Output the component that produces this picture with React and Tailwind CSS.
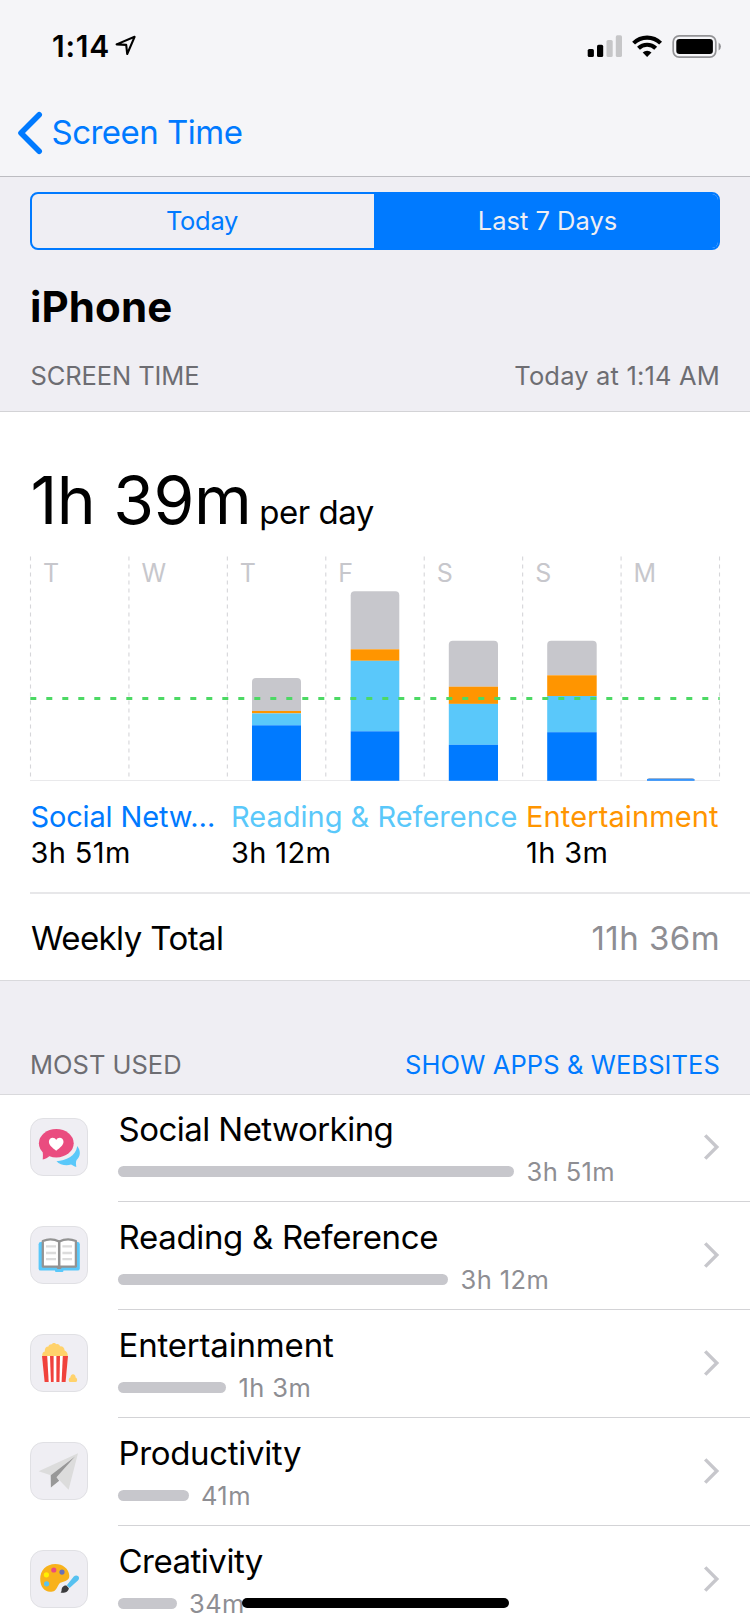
import React from "react";

const GRAY = "#c7c7cc";
const ORANGE = "#ff9500";
const SKY = "#5ac8fa";
const BLUE = "#007aff";

function StatusBar() {
  return (
    <div className="flex h-[92px] items-center justify-between pr-[28px] pl-[52px]">
      <div className="flex items-center gap-[5px]">
        <span className="text-[30px] leading-none font-semibold tracking-[0.8px]">1:14</span>
        <svg width="22" height="22" viewBox="0 0 22 22" className="mb-px">
          <path d="M1.6 9.4 L19.6 1.8 L12.2 19 L11.2 9.9 Z" fill="none" stroke="#000" strokeWidth="2.1" strokeLinejoin="round" />
        </svg>
      </div>
      <svg width="135" height="24" viewBox="587 34 135 24">
        <rect x="587.7" y="49" width="6.2" height="8" rx="1.6" fill="#000" />
        <rect x="597" y="44.8" width="6.2" height="12.2" rx="1.6" fill="#000" />
        <rect x="606.5" y="40" width="6.2" height="17" rx="1.6" fill="#c6c6c8" />
        <rect x="615.8" y="35.3" width="6.2" height="21.7" rx="1.6" fill="#c6c6c8" />
        <g fill="none" stroke="#000" strokeWidth="4.1">
          <path d="M633.6 43.1 A19.3 19.3 0 0 1 660.6 43.1" />
          <path d="M638.5 48.2 A12.3 12.3 0 0 1 655.7 48.2" />
        </g>
        <path d="M647.1 57 L642.7 52.4 A6.4 6.4 0 0 1 651.5 52.4 Z" fill="#000" />
        <rect x="673.2" y="35.9" width="42.6" height="21.2" rx="6" fill="none" stroke="#939396" strokeWidth="1.7" />
        <rect x="676.3" y="38.9" width="36.6" height="15" rx="3.2" fill="#000" />
        <path d="M718.6 42.6 A4.6 4.6 0 0 1 718.6 50.6 Z" fill="#939396" />
      </svg>
    </div>
  );
}

function NavBar() {
  return (
    <div className="flex h-[81px] items-center pl-[17px] text-[#007aff]">
      <svg width="26" height="44" viewBox="0 0 26 44">
        <path d="M22.2 3.8 L4 22 L22.2 40.2" fill="none" stroke="currentColor" strokeWidth="5.6" strokeLinecap="round" strokeLinejoin="round" />
      </svg>
      <span className="ml-[8.5px] text-[33px] leading-none tracking-[-0.52px]">Screen Time</span>
    </div>
  );
}

const days = ["T", "W", "T", "F", "S", "S", "M"];
const bars = [
  { x: 252, w: 49, top: 678, orange: 711, sky: 713.4, blue: 725.3 },
  { x: 350.7, w: 48.6, top: 591.3, orange: 649.3, sky: 660.8, blue: 731.3 },
  { x: 448.8, w: 49.2, top: 640.7, orange: 686.7, sky: 703.9, blue: 744.8 },
  { x: 547.2, w: 49.5, top: 640.7, orange: 675.3, sky: 696, blue: 732.2 },
];
const BASE = 780.8;

function Chart() {
  return (
    <svg width="750" height="235" viewBox="0 550 750 235" className="block">
      {[0, 1, 2, 3, 4, 5, 6, 7].map((i) => (
        <line key={i} x1={30.5 + i * 98.43} x2={30.5 + i * 98.43} y1="556.5" y2="778" stroke="#d6d6d9" strokeWidth="1.1" strokeDasharray="4 4" />
      ))}
      {days.map((d, i) => (
        <text key={i} x={43 + i * 98.43} y="581.6" fontSize="25" fill={GRAY}>{d}</text>
      ))}
      <rect x="30" y="780" width="690" height="1" fill="#e9e9eb" />
      {bars.map((b) => (
        <g key={b.x}>
          <path d={`M${b.x} ${b.orange} V${b.top + 4} q0 -4 4 -4 H${b.x + b.w - 4} q4 0 4 4 V${b.orange} Z`} fill={GRAY} />
          <rect x={b.x} y={b.orange} width={b.w} height={b.sky - b.orange} fill={ORANGE} />
          <rect x={b.x} y={b.sky} width={b.w} height={b.blue - b.sky} fill={SKY} />
          <rect x={b.x} y={b.blue} width={b.w} height={BASE - b.blue} fill={BLUE} />
        </g>
      ))}
      <path d="M647 780.8 q0 -2.8 2.5 -2.8 H692 q2.5 0 2.5 2.8 Z" fill="#9fb2cc" />
      <rect x="647" y="779" width="47.5" height="1.8" fill="#3395ff" />
      <line x1="30.3" x2="719.7" y1="698.5" y2="698.5" stroke="#4cd964" strokeWidth="2.8" strokeDasharray="6 10" />
    </svg>
  );
}

function SocialIcon() {
  return (
    <g>
      <path d="M47.3 28 C51 33 50.6 38.5 46.6 42 C45.6 43.5 46 46.5 46.3 49 C44.3 48.5 42.3 47.3 41 46.6 C36 48 29.5 46.8 26.5 43.2 C36 42.5 45.6 38.5 47.3 28 Z" fill="#5ac8fa" />
      <ellipse cx="26.3" cy="25.2" rx="17.4" ry="14.2" fill="#ea4c7f" />
      <path d="M12.2 32 C13.2 35 13 38.5 12.7 41.6 C15.5 41 17.5 39.8 19.5 38 Z" fill="#ea4c7f" />
      <path d="M26.2 32.8 C22 29.3 18.9 27 18.9 23.7 C18.9 19.2 24.5 18.2 26.2 22 C27.9 18.2 33.5 19.2 33.5 23.7 C33.5 27 30.4 29.3 26.2 32.8 Z" fill="#fff" />
    </g>
  );
}

function BookIcon() {
  return (
    <g>
      <rect x="8.6" y="16" width="41.2" height="28.6" rx="2.2" fill="#5ac8fa" />
      <rect x="25" y="43" width="8.4" height="3" rx="1" fill="#5ac8fa" />
      <path d="M12.8 15 Q21 11.4 29.2 15.6 Q37.4 11.4 45.9 15 V40.6 H12.8 Z" fill="#fff" stroke="#939393" strokeWidth="2.3" strokeLinejoin="round" />
      <path d="M26.4 40.8 H32 L31 43 H27.4 Z" fill="#939393" />
      <path d="M29.2 15.6 V42" stroke="#939393" strokeWidth="2.5" />
      <path d="M16 20.4 H26 M16 27 H26 M16 33.2 H26 M32.4 20.4 H42 M32.4 27 H42 M32.4 33.2 H42" stroke="#dcdcdc" strokeWidth="2.3" />
    </g>
  );
}

function PopcornIcon() {
  return (
    <g>
      <path d="M12.4 22.4 C11.8 19.6 13 17.6 14.8 17.4 C14.6 14.4 16 12.6 18.4 12.6 C18.8 10.8 20.4 10 21.8 10.3 C22.8 8.6 25.2 8.6 26.2 10.3 C28 9.6 29.6 10.6 30 12.4 C32.6 12 34.6 14 34.6 16.4 C37 17.6 38.2 19.8 37.6 22.4 Z" fill="#ffd26b" />
      <path d="M12 22 H38 L35.6 48 H14.6 Z" fill="#fff" />
      <path d="M12 22 H17.2 L18.7 48 H14.6 Z" fill="#f0423c" />
      <path d="M20 22 H23.6 V48 H20.9 Z" fill="#f0423c" />
      <path d="M26.4 22 H30 L29.5 48 H26.4 Z" fill="#f0423c" />
      <path d="M32.8 22 H38 L35.6 48 H31.6 Z" fill="#f0423c" />
      <path d="M38.8 46.8 C38.4 44.8 39.4 43.8 40.4 43.6 C40.4 41.6 41.6 40.3 43 40.3 C44.6 40.3 45.6 41.6 45.6 43.4 C47 44 47.4 45.6 47 47 Q46.8 48 45.6 48 H40 Q39 48 38.8 46.8 Z" fill="#ffd26b" />
    </g>
  );
}

function PlaneIcon() {
  return (
    <g>
      <path d="M48 11.2 L8.6 29.2 L20.8 33.2 L44.6 14.6 L26.6 35.2 L38.6 47.8 Z" fill="#dcdcdc" />
      <path d="M20.7 33.2 L45 14.4 L26.5 35.2 L29.2 38.8 L20.9 45.4 Z" fill="#989898" />
    </g>
  );
}

function PaletteIcon() {
  return (
    <g>
      <path d="M39.3 25.5 C38.8 18.5 32.5 13.9 25.4 13.9 C16 13.9 10.2 20.5 10.2 28.8 C10.2 36.8 14.6 41.8 20 41.8 C28.6 41.8 26.4 34 31.2 32.4 C35 31 39.6 30.6 39.3 25.5 Z" fill="#f8b21b" />
      <circle cx="16.4" cy="24.8" r="2.6" fill="#fff100" />
      <circle cx="23.8" cy="20" r="2.6" fill="#ea4c7f" />
      <circle cx="32" cy="22.1" r="2.6" fill="#6a72b8" />
      <circle cx="16.6" cy="33.8" r="2.6" fill="#5ac3ee" />
      <path d="M48.3 26.3 C49.6 27.7 49 29.5 47.9 30.6 L39.6 38 L36.8 35.3 L43.8 26.6 C45 25.2 47 25 48.3 26.3 Z" fill="#56c1f0" />
      <path d="M36.4 35.6 L38.9 38.2 C38.4 41.6 34.6 43.6 30.6 42.6 C32.2 41.6 31 39.6 32.2 37.6 C33.2 36 35 35.4 36.4 35.6 Z" fill="#3b3b3d" />
    </g>
  );
}

const apps = [
  { name: "Social Networking", time: "3h 51m", Icon: SocialIcon, bar: "w-[396px]", track: "tracking-[-0.54px]" },
  { name: "Reading & Reference", time: "3h 12m", Icon: BookIcon, bar: "w-[330px]", track: "tracking-[-0.32px]" },
  { name: "Entertainment", time: "1h 3m", Icon: PopcornIcon, bar: "w-[108px]", track: "tracking-[-0.18px]" },
  { name: "Productivity", time: "41m", Icon: PlaneIcon, bar: "w-[70.5px]", track: "tracking-[-0.33px]" },
  { name: "Creativity", time: "34m", Icon: PaletteIcon, bar: "w-[58.5px]", track: "tracking-[-0.5px]" },
];

function AppRow({ name, time, Icon, bar, track }) {
  return (
    <div className="flex h-[108px] shrink-0 pl-[30px]">
      <div className="pt-[24px]">
        <svg width="58" height="58" viewBox="0 0 58 58">
          <rect x="0.5" y="0.5" width="57" height="57" rx="12.5" fill="#efeef3" stroke="#e0e0e4" />
          <Icon />
        </svg>
      </div>
      <div className="ml-[30px] flex flex-1 border-b border-[#d3d3d6]">
        <div className="flex-1 pt-[15px]">
          <div className={`flex h-[40px] items-center pl-[0.5px] text-[33px] leading-none ${track}`}>{name}</div>
          <div className="mt-[5.5px] flex h-[34px] items-center gap-[12.5px]">
            <div className={`h-[10.5px] rounded-full bg-[#c7c7cc] ${bar}`} />
            <span className="text-[25.5px] leading-none tracking-[0.4px] text-[#8e8e93]">{time}</span>
          </div>
        </div>
        <svg width="18" height="28" viewBox="0 0 18 28" className="mt-[39px] mr-[29px]">
          <path d="M2.2 2.4 L13.8 14 L2.2 25.6" fill="none" stroke="#c7c7cc" strokeWidth="3.4" />
        </svg>
      </div>
    </div>
  );
}

export default function App() {
  return (
    <div className="relative flex h-[1624px] w-[750px] flex-col overflow-hidden bg-white font-['Inter',sans-serif] text-black">
      <header className="h-[177px] shrink-0 border-b border-[#bcbcc1] bg-[#f5f5f8]">
        <StatusBar />
        <NavBar />
      </header>

      <section className="h-[235px] shrink-0 border-b border-[#d3d3d6] bg-[#efeef3] px-[30px] pt-[15px]">
        <div className="flex h-[58px] overflow-hidden rounded-[8px] border-2 border-[#007aff] text-[25.5px] leading-none">
          <div className="flex w-[342px] items-center justify-center pr-[2px] tracking-[-0.3px] text-[#007aff]">Today</div>
          <div className="flex flex-1 items-center justify-center bg-[#007aff] pl-[3px] text-[#efeef3]">Last 7 Days</div>
        </div>
        <div className="mt-[32px] flex h-[50px] items-center text-[42px] leading-none font-bold tracking-[0.1px]">iPhone</div>
        <div className="mt-[28.5px] flex h-[31px] items-center justify-between text-[25.5px] leading-none text-[#6d6d72]">
          <span className="pl-[0.5px] tracking-[-0.1px]">SCREEN TIME</span>
          <span className="tracking-[0.17px]">Today at 1:14 AM</span>
        </div>
      </section>

      <section className="h-[480px] shrink-0">
        <div className="flex h-[138px] items-baseline pt-[48px] pl-[30.5px] leading-[80px]">
          <span className="text-[66px] tracking-[-0.55px]">1h 39m</span>
          <span className="ml-[8px] text-[33px] tracking-[-0.45px]">per day</span>
        </div>
        <Chart />
        <div className="mt-[13.5px] grid h-[72px] grid-cols-[200.5px_295px_1fr] pl-[30.5px] text-[29px] leading-[36px] whitespace-nowrap">
          <div>
            <div className="tracking-[-0.15px] text-[#007aff]">Social Netw…</div>
            <div className="tracking-[0.37px]">3h 51m</div>
          </div>
          <div>
            <div className="text-[#5ac8fa]">Reading &amp; Reference</div>
            <div className="tracking-[0.37px]">3h 12m</div>
          </div>
          <div>
            <div className="tracking-[0.12px] text-[#ff9500]">Entertainment</div>
            <div className="tracking-[0.37px]">1h 3m</div>
          </div>
        </div>
        <div className="mt-[21.5px] ml-[30px] h-[2px] bg-[#e7e7e9]" />
      </section>

      <section className="flex h-[88px] shrink-0 items-center justify-between pt-[4px] pr-[30px] pl-[31px] text-[33px] leading-none">
        <span className="tracking-[-0.58px]">Weekly Total</span>
        <span className="tracking-[0.45px] text-[#8e8e93]">11h 36m</span>
      </section>

      <section className="flex h-[115px] shrink-0 items-end justify-between border-y border-[#d9d9dc] bg-[#efeef3] px-[30px] pb-[16px] text-[25.5px] leading-[27px]">
        <span className="text-[#6d6d72]">MOST USED</span>
        <span className="tracking-[0.1px] text-[#007aff]">SHOW APPS &amp; WEBSITES</span>
      </section>

      <section className="-mt-px">
        {apps.map((app) => (
          <AppRow key={app.name} {...app} />
        ))}
      </section>

      <div className="absolute top-[1598px] left-[241.5px] h-[10px] w-[267.5px] rounded-full bg-black" />
    </div>
  );
}
